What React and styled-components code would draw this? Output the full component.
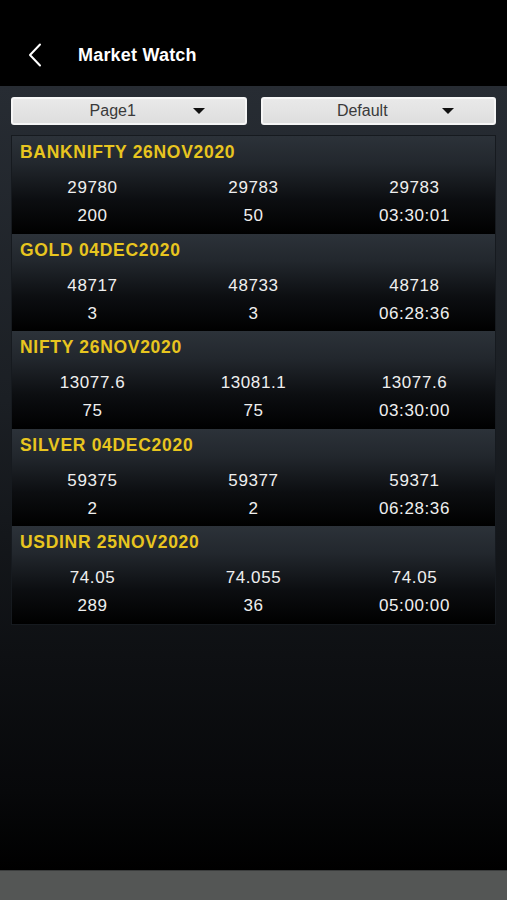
import React from 'react'
import styled, { createGlobalStyle } from 'styled-components'

const GlobalStyle = createGlobalStyle`
  html, body {
    margin: 0;
    padding: 0;
    background: #000;
  }
  * {
    box-sizing: border-box;
  }
`

const rows = [
  { name: 'BANKNIFTY 26NOV2020', vals: ['29780', '29783', '29783', '200', '50', '03:30:01'] },
  { name: 'GOLD 04DEC2020', vals: ['48717', '48733', '48718', '3', '3', '06:28:36'] },
  { name: 'NIFTY 26NOV2020', vals: ['13077.6', '13081.1', '13077.6', '75', '75', '03:30:00'] },
  { name: 'SILVER 04DEC2020', vals: ['59375', '59377', '59371', '2', '2', '06:28:36'] },
  { name: 'USDINR 25NOV2020', vals: ['74.05', '74.055', '74.05', '289', '36', '05:00:00'] },
]

const App = () => {
  return (
    <Screen>
      <GlobalStyle />
      <Header>
        <BackButton>
          <svg width="14" height="24" viewBox="0 0 14 24" fill="none">
            <path d="M12 1.5 L2 12 L12 22.5" stroke="#fff" strokeWidth="2" strokeLinecap="round" strokeLinejoin="round" />
          </svg>
        </BackButton>
        <Title>Market Watch</Title>
      </Header>
      <Body>
        <Filters>
          <Select>
            <SelectText>Page1</SelectText>
            <Caret />
          </Select>
          <Select>
            <SelectText>Default</SelectText>
            <Caret />
          </Select>
        </Filters>
        <List>
          {rows.map((r) => (
            <Card key={r.name}>
              <Symbol>{r.name}</Symbol>
              <Values>
                {r.vals.map((v, i) => (
                  <Value key={i}>{v}</Value>
                ))}
              </Values>
            </Card>
          ))}
        </List>
      </Body>
      <BottomBar />
    </Screen>
  )
}

const Screen = styled.div`
  width: 507px;
  height: 900px;
  display: flex;
  flex-direction: column;
  font-family: 'Liberation Sans', Arial, sans-serif;
  overflow: hidden;
`

const Header = styled.div`
  height: 86px;
  background: #000;
  display: flex;
  align-items: center;
  padding: 24px 0 0 28px;
`

const BackButton = styled.div`
  width: 14px;
  height: 24px;
  display: flex;
  margin-right: 36px;
`

const Title = styled.div`
  color: #fff;
  font-size: 18px;
  font-weight: 700;
  letter-spacing: 0.2px;
`

const Body = styled.div`
  flex: 1;
  background: linear-gradient(180deg, #272c33 0%, #1b1f24 40%, #07080a 90%, #000 100%);
  padding: 11px 11px 0;
  display: flex;
  flex-direction: column;
`

const Filters = styled.div`
  display: grid;
  grid-template-columns: 1fr 1fr;
  gap: 14px;
  margin-bottom: 10px;
`

const Select = styled.div`
  height: 28px;
  background: linear-gradient(180deg, #e9e9e9 0%, #dedede 100%);
  border: 2px solid #f6f6f6;
  border-radius: 3px;
  display: flex;
  align-items: center;
  padding-left: 20px;
  padding-right: 40px;
`

const SelectText = styled.div`
  flex: 1;
  text-align: center;
  color: #3a3a3a;
  font-size: 16px;
`

const Caret = styled.div`
  width: 0;
  height: 0;
  border-left: 6px solid transparent;
  border-right: 6px solid transparent;
  border-top: 6px solid #111;
`

const List = styled.div`
  border: 1px solid #161a1f;
  display: flex;
  flex-direction: column;
`

const Card = styled.div`
  height: 97.6px;
  padding: 6px 0 4px;
  background: linear-gradient(180deg, #2c3239 0%, #22272d 28%, #0c0e11 65%, #000 100%);
`

const Symbol = styled.div`
  color: #e8c51f;
  font-size: 17.5px;
  font-weight: 700;
  line-height: 20px;
  letter-spacing: 0.7px;
  padding-left: 8px;
  margin-bottom: 12px;
`

const Values = styled.div`
  display: grid;
  grid-template-columns: repeat(3, 1fr);
`

const Value = styled.div`
  color: #efefef;
  font-size: 17px;
  line-height: 28px;
  letter-spacing: 0.6px;
  text-align: center;
`

const BottomBar = styled.div`
  height: 30px;
  background: #545655;
  border-top: 1px solid #3b3d3d;
`

export default App
